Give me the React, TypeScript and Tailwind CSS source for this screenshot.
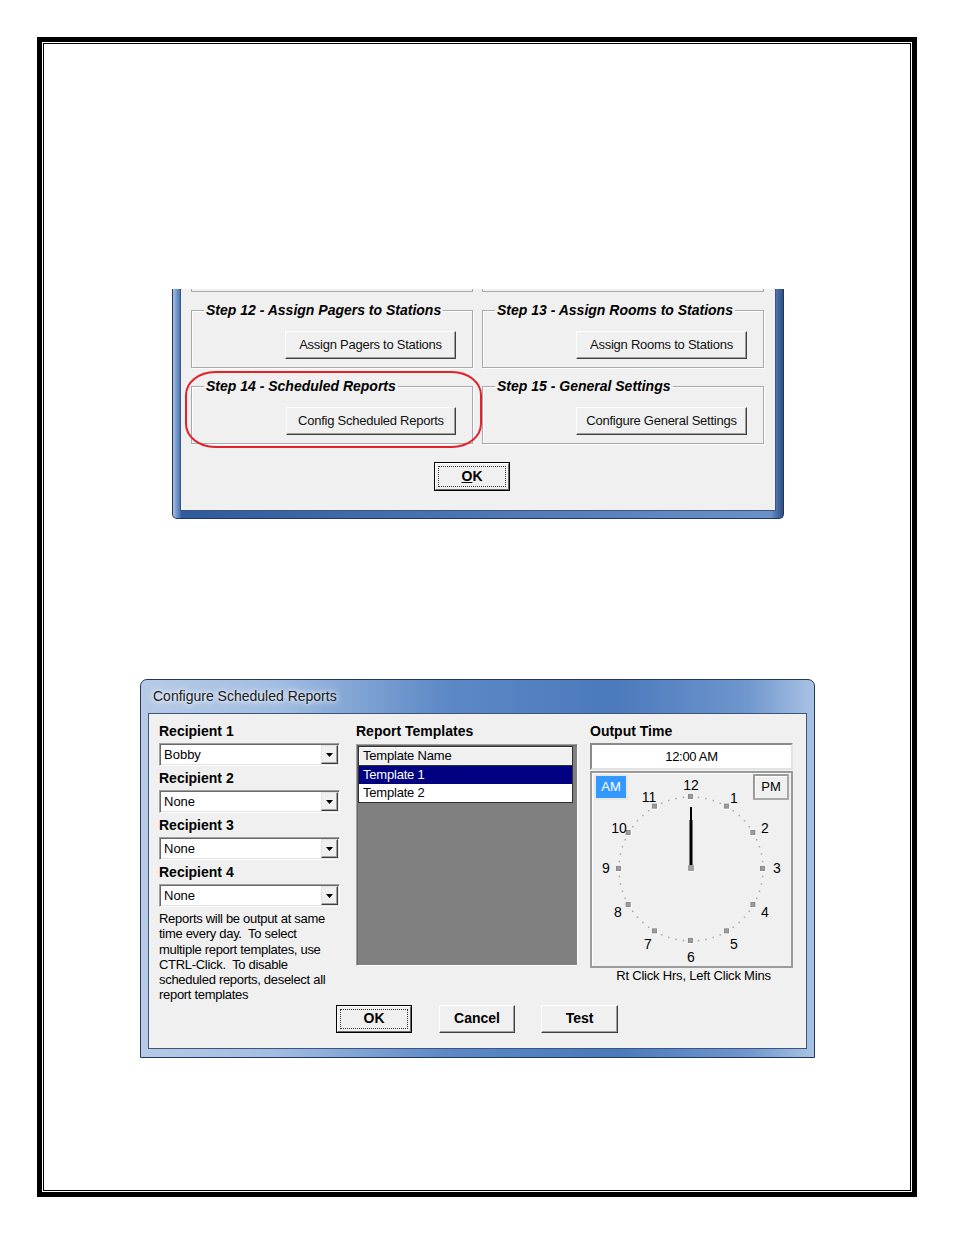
import React from "react"

// classic win32 raised button
function WinButton({
  children,
  className = "",
  isDefault = false,
}: {
  children: React.ReactNode
  className?: string
  isDefault?: boolean
}) {
  if (isDefault) {
    return (
      <div className={`border border-black ${className}`}>
        <div className="flex h-full w-full border border-t-white border-l-white border-r-[#696969] border-b-[#696969] bg-[#f0f0f0] p-[2px]">
          <div className="flex h-full w-full items-center justify-center border border-dotted border-[#333]">
            {children}
          </div>
        </div>
      </div>
    )
  }
  return (
    <div
      className={`flex items-center justify-center border border-t-white border-l-white border-r-[#404040] border-b-[#404040] bg-[#f0f0f0] shadow-[inset_-1px_-1px_0_#a0a0a0] ${className}`}
    >
      {children}
    </div>
  )
}

function GroupBox({ title, button, btnWidth }: { title: string; button: string; btnWidth: string }) {
  return (
    <div className="relative h-[58px] w-[282px] border border-[#a9a9a9] shadow-[1px_1px_0_#fff,inset_1px_1px_0_#fff]">
      <span className="absolute -top-[9px] left-[12px] bg-[#f0f0f0] px-[2px] text-[14px] leading-[16px] font-bold italic text-black">
        {title}
      </span>
      <div className="flex justify-end pr-[16px] pt-[20px]">
        <WinButton className={`h-[28px] ${btnWidth} text-[13px] tracking-[-0.25px] text-[#111]`}>{button}</WinButton>
      </div>
    </div>
  )
}

function Combo({ value }: { value: string }) {
  return (
    <div className="flex h-[23px] w-[181px] border border-t-[#a0a0a0] border-l-[#a0a0a0] border-r-white border-b-white bg-white p-[1px] shadow-[inset_1px_1px_0_#696969,inset_-1px_-1px_0_#e3e3e3]">
      <span className="flex-1 pl-[3px] text-[13px] leading-[19px] text-black">{value}</span>
      <div className="flex h-[19px] w-[17px] items-center justify-center border border-t-[#e3e3e3] border-l-[#e3e3e3] border-r-[#404040] border-b-[#404040] bg-[#f0f0f0] shadow-[inset_-1px_-1px_0_#a0a0a0]">
        <svg width="7" height="4" viewBox="0 0 7 4">
          <path d="M0 0h7L3.5 4z" fill="#000" />
        </svg>
      </div>
    </div>
  )
}

const numbers: [string, number, number][] = [
  ["12", 0, -84],
  ["1", 43, -71],
  ["2", 74, -41],
  ["3", 86, -1],
  ["4", 74, 43],
  ["5", 43, 75],
  ["6", 0, 88],
  ["7", -43, 75],
  ["8", -73, 43],
  ["9", -85, -1],
  ["10", -72, -41],
  ["11", -42, -72],
]

function ClockFace() {
  const cx = 99
  const cy = 96
  const r = 72
  const markers = Array.from({ length: 12 }, (_, i) => {
    const a = (i * 30 * Math.PI) / 180
    return { x: cx + r * Math.sin(a), y: cy - r * Math.cos(a) }
  })
  const dots: { x: number; y: number }[] = []
  for (let m = 0; m < 60; m++) {
    if (m % 5 === 0) continue
    const a = (m * 6 * Math.PI) / 180
    dots.push({ x: cx + r * Math.sin(a), y: cy - r * Math.cos(a) })
  }
  return (
    <svg width="199" height="193" viewBox="0 0 199 193" className="absolute left-0 top-0">
      {dots.map((d, i) => (
        <rect key={i} x={d.x - 0.75} y={d.y - 0.75} width="1.5" height="1.5" fill="#a8a8a8" />
      ))}
      {markers.map((m, i) => (
        <g key={i}>
          <rect x={m.x - 3} y={m.y - 3} width="6" height="6" fill="#fdfdfd" />
          <rect x={m.x - 3} y={m.y - 3} width="5" height="5" fill="#8a8a8a" />
          <rect x={m.x - 2} y={m.y - 2} width="3" height="3" fill="#9c9c9c" />
        </g>
      ))}
      {numbers.map(([n, dx, dy]) => (
        <text
          key={n}
          x={cx + dx}
          y={cy + dy}
          textAnchor="middle"
          dominantBaseline="central"
          fontFamily="'Liberation Sans', Arial, sans-serif"
          fontSize="14"
          fill="#000"
        >
          {n}
        </text>
      ))}
      {/* hand */}
      <rect x="98" y="34" width="2" height="14" fill="#000" />
      <rect x="97.5" y="47" width="3" height="48" fill="#000" />
      <rect x="96" y="92" width="7" height="7" fill="#fdfdfd" />
      <rect x="96" y="92" width="6" height="6" fill="#a0a0a0" />
    </svg>
  )
}

export default function App() {
  return (
    <div className="h-[1235px] w-[954px] bg-white p-[37px] font-['Liberation_Sans',Arial,sans-serif]">
      <div className="h-[1160px] w-[880px] border-[5px] border-black p-[1px]">
        <div className="h-full w-full border border-black">
          {/* first screenshot: setup wizard tail */}
          <div className="relative ml-[128px] mt-[245px] flex h-[230px] w-[612px] flex-col rounded-b-[5px] border-x border-b border-[#22375a] bg-[linear-gradient(to_right,#a9bfdf,#4371b3_1.2%,#2f5a9c_1.4%,#6a92ca_98%,#2d4f85)] px-[7px] pb-[7px]">
            <div className="flex-1 border-x border-b border-[#3c5579] bg-[#f0f0f0]">
              <div className="ml-[10px] flex gap-[9px]">
                <div className="h-[3px] w-[282px] border-x border-b border-[#a9a9a9]" />
                <div className="h-[3px] w-[282px] border-x border-b border-[#a9a9a9]" />
              </div>
              <div className="ml-[10px] mt-[18px] flex gap-[9px]">
                <GroupBox title="Step 12 - Assign Pagers to Stations" button="Assign Pagers to Stations" btnWidth="w-[171px]" />
                <GroupBox title="Step 13 - Assign Rooms to Stations" button="Assign Rooms to Stations" btnWidth="w-[171px]" />
              </div>
              <div className="ml-[10px] mt-[18px] flex gap-[9px]">
                <GroupBox title="Step 14 - Scheduled Reports" button="Config Scheduled Reports" btnWidth="w-[170px]" />
                <GroupBox title="Step 15 - General Settings" button="Configure General Settings" btnWidth="w-[171px]" />
              </div>
              <WinButton isDefault className="ml-[253px] mt-[18px] h-[29px] w-[76px]">
                <span className="text-[14px] font-bold text-black">
                  <span className="underline">O</span>K
                </span>
              </WinButton>
            </div>
            {/* red annotation */}
            <div className="absolute left-[12px] top-[82px] h-[77px] w-[297px] rounded-[30px/24px] border-[2.5px] border-[#e0242b]" />
          </div>

          {/* second screenshot: configure scheduled reports dialog */}
          <div className="ml-[96px] mt-[160px] flex h-[379px] w-[675px] flex-col rounded-t-[7px] border border-[#22375a] bg-[linear-gradient(to_right,#b7cae6,#a2bde2_20%,#5d89c6_45%,#4a79bc_70%,#6f96cd_90%,#a9c2e4)]">
            <div className="flex h-[33px] items-center pl-[12px] text-[14px] text-[#1a1a1a] [text-shadow:0_0_8px_#fff,0_0_4px_#fff]">
              Configure Scheduled Reports
            </div>
            <div className="flex flex-1 flex-col px-[7px] pb-[8px]">
              <div className="flex-1 border border-[#3c5579] bg-[#f0f0f0] pl-[10px] pt-[5px]">
                <div className="flex">
                  {/* recipients */}
                  <div className="w-[181px]">
                    {[
                      ["Recipient 1", "Bobby"],
                      ["Recipient 2", "None"],
                      ["Recipient 3", "None"],
                      ["Recipient 4", "None"],
                    ].map(([label, value]) => (
                      <div key={label}>
                        <div className="h-[24px] text-[14px] leading-[24px] font-bold text-black">{label}</div>
                        <Combo value={value} />
                      </div>
                    ))}
                    <p className="mt-[4px] whitespace-pre text-[13px] leading-[15.3px] tracking-[-0.3px] text-black">
                      Reports will be output at same{"\n"}time every day.  To select{"\n"}multiple report templates, use{"\n"}CTRL-Click.  To disable{"\n"}scheduled reports, deselect all{"\n"}report templates
                    </p>
                  </div>

                  {/* templates */}
                  <div className="ml-[16px] w-[222px]">
                    <div className="h-[24px] text-[14px] leading-[24px] font-bold text-black">Report Templates</div>
                    <div className="mt-[1px] h-[222px] w-[222px] border border-t-[#a0a0a0] border-l-[#a0a0a0] border-r-white border-b-white bg-[#808080] p-[1px] shadow-[inset_1px_1px_0_#696969]">
                      <div className="w-[215px] border border-[#303030] text-[13px] tracking-[-0.2px]">
                        <div className="h-[19px] border-b border-[#303030] bg-[#f0f0f0] pl-[4px] leading-[18px] text-black shadow-[inset_1px_1px_0_#fff]">
                          Template Name
                        </div>
                        <div className="h-[18px] bg-[#000080] pl-[4px] leading-[18px] text-white">Template 1</div>
                        <div className="h-[18px] bg-white pl-[4px] leading-[18px] text-black">Template 2</div>
                      </div>
                    </div>
                  </div>

                  {/* output time */}
                  <div className="ml-[12px] w-[203px]">
                    <div className="h-[24px] text-[14px] leading-[24px] font-bold text-black">Output Time</div>
                    <div className="flex h-[27px] items-center justify-center border-2 border-t-[#8a8a8a] border-l-[#8a8a8a] border-r-[#e3e3e3] border-b-[#e3e3e3] bg-white text-[13px] tracking-[-0.3px] text-black">
                      12:00 AM
                    </div>
                    <div className="relative mt-[1px] h-[197px] w-[203px] border-2 border-[#9a9a9a] shadow-[inset_1px_1px_0_#fff]">
                      <ClockFace />
                      <div className="relative flex justify-between px-[2px] pt-[1px]">
                        <div className="flex h-[26px] w-[34px] items-center justify-center border-2 border-[#e8e8e8] bg-[#3399ff] text-[13px] text-white">
                          AM
                        </div>
                        <div className="flex h-[26px] w-[36px] items-center justify-center border-2 border-t-[#9a9a9a] border-l-[#9a9a9a] border-r-[#a8a8a8] border-b-[#a8a8a8] bg-[#f0f0f0] text-[13px] text-black shadow-[inset_1px_1px_0_#fff]">
                          PM
                        </div>
                      </div>
                    </div>
                    <div className="mt-[1px] pl-[4px] text-center text-[13px] leading-[14px] tracking-[-0.2px] text-black">
                      Rt Click Hrs, Left Click Mins
                    </div>
                  </div>
                </div>

                <div className="ml-[177px] mt-[2px] flex">
                  <WinButton isDefault className="h-[28px] w-[76px]">
                    <span className="text-[14px] font-bold text-black">OK</span>
                  </WinButton>
                  <WinButton className="ml-[27px] h-[28px] w-[76px] text-[14px] font-bold text-black">Cancel</WinButton>
                  <WinButton className="ml-[26px] h-[28px] w-[77px] text-[14px] font-bold text-black">Test</WinButton>
                </div>
              </div>
            </div>
          </div>
        </div>
      </div>
    </div>
  )
}
